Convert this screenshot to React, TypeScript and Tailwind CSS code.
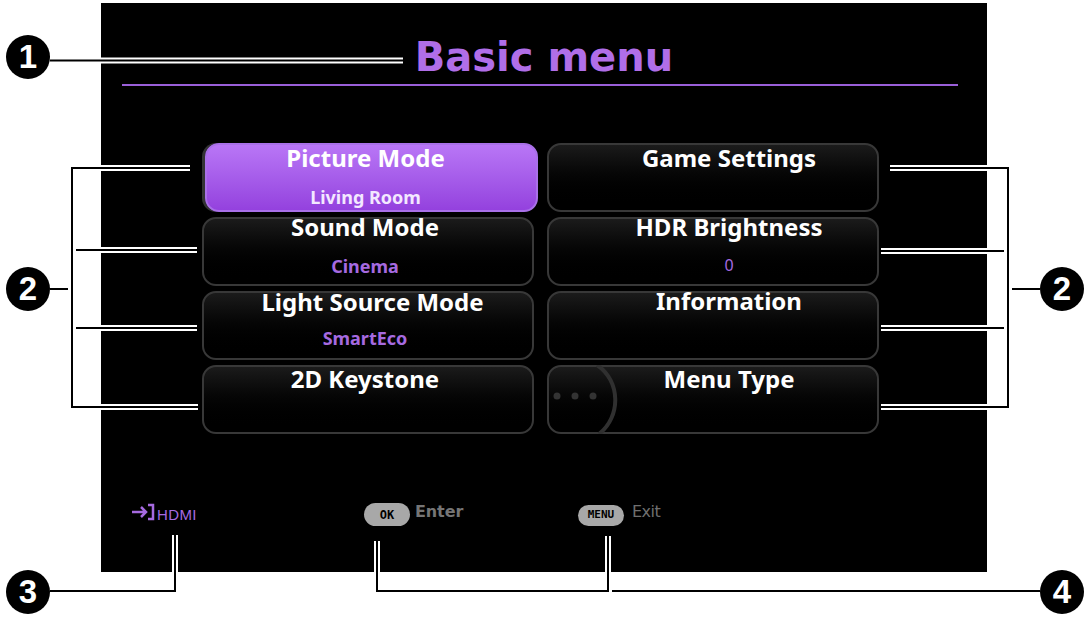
const font = "font-['DejaVu_Sans',sans-serif]";

type Item = { title: string; value?: string; pad: string; gap: string; shift?: string; selected?: boolean; dots?: boolean };

const left: Item[] = [
  { title: "Picture Mode", value: "Living Room", pad: "mt-0", gap: "mt-[16px]", selected: true },
  { title: "Sound Mode", value: "Cinema", pad: "-mt-[5px]", gap: "mt-[16px]" },
  { title: "Light Source Mode", value: "SmartEco", pad: "-mt-[4px]", gap: "mt-[13px]", shift: "pl-[15px]" },
  { title: "2D Keystone", pad: "-mt-[1px]", gap: "" },
];

const right: Item[] = [
  { title: "Game Settings", pad: "mt-0", gap: "" },
  { title: "HDR Brightness", value: "0", pad: "-mt-[5px]", gap: "mt-[15px]" },
  { title: "Information", pad: "-mt-[5px]", gap: "" },
  { title: "Menu Type", pad: "-mt-[1px]", gap: "", dots: true },
];

function MenuCard({ item, side }: { item: Item; side: string }) {
  return (
    <div
      className={
        item.selected
          ? "relative h-[69px] w-[333px] translate-x-[3px] rounded-[14px] border-2 border-[#a970e8] bg-gradient-to-b from-[#b976f6] to-[#9441de] text-center shadow-[-3px_0_0_0_#333]"
          : "relative h-[69px] w-[332px] rounded-[14px] border-2 border-[#383838] bg-gradient-to-b from-[#1b1b1b] to-[#000] text-center"
      }
    >
      {item.dots && (
        <svg className="absolute left-[-2px] top-[-2px]" width="80" height="69" viewBox="0 0 80 69">
          <path d="M50 0 C74 16 74 52 52 69" fill="none" stroke="#303030" strokeWidth="4" />
          <circle cx="10" cy="31" r="3.5" fill="#333" />
          <circle cx="28" cy="31" r="3.5" fill="#333" />
          <circle cx="46" cy="31" r="3.5" fill="#333" />
        </svg>
      )}
      <div className={`relative font-['Noto_Sans',sans-serif] ${item.pad} ${item.selected ? "pr-[12px]" : side}`}>
        <div className={`text-[24px] font-bold leading-[26px] text-white ${item.shift ?? ""}`}>{item.title}</div>
        {item.value && (
          <div
            className={
              item.selected
                ? `${item.gap} text-[18px] font-bold leading-[20px] text-[#f3e8ff]`
                : item.value === "0"
                  ? `${item.gap} text-[16px] leading-[20px] text-[#a66ae0]`
                  : `${item.gap} text-[18px] font-bold leading-[20px] text-[#a66ae0]`
            }
          >
            {item.value}
          </div>
        )}
      </div>
    </div>
  );
}

function Badge({ n, className }: { n: number; className: string }) {
  return (
    <div
      className={`absolute flex h-[44px] w-[44px] items-center justify-center rounded-full bg-black font-['Liberation_Sans',sans-serif] text-[33px] font-bold text-white ${className}`}
    >
      {n}
    </div>
  );
}

// leader lines: white halo where they cross the panel, black core on top
const leaders = [
  "M50 60.5H403",
  "M190 168H72V407H198",
  "M76 250H197",
  "M76 328H197",
  "M50 289H68",
  "M890 168H1008V407H881",
  "M881 251H1004",
  "M881 328H1004",
  "M1012 289H1040",
  "M50 591H175V535",
  "M377 541V591H608V536",
  "M612 591H1040",
];

function Leaders() {
  return (
    <svg className="pointer-events-none absolute left-0 top-0" width="1088" height="617" viewBox="0 0 1088 617">
      {leaders.map((d) => (
        <path key={d + "w"} d={d} fill="none" stroke="#fff" strokeWidth="6" />
      ))}
      {leaders.map((d) => (
        <path key={d} d={d} fill="none" stroke="#000" strokeWidth="2" />
      ))}
    </svg>
  );
}

export default function App() {
  return (
    <div className={`relative h-[617px] w-[1088px] overflow-hidden bg-white pl-[101px] pt-[3px] ${font}`}>
      <div className="flex h-[569px] w-[886px] flex-col bg-black">
        <div className="h-[81px] pt-[26px] text-center text-[40px] font-bold leading-[56px] text-[#b06ee8]">
          Basic menu
        </div>
        <div className="ml-[21px] h-[2px] w-[836px] bg-[#9a5fd8]" />

        <div className="ml-[101px] mt-[57px] grid w-[677px] grid-cols-2 gap-x-[13px]">
          <div className="flex flex-col gap-[5px]">
            {left.map((item) => (
              <MenuCard key={item.title} item={item} side="pr-[6px]" />
            ))}
          </div>
          <div className="flex flex-col gap-[5px]">
            {right.map((item) => (
              <MenuCard key={item.title} item={item} side="pl-[32px]" />
            ))}
          </div>
        </div>

        <div className="mt-[69px] flex items-start pl-[31px]">
          <div className="flex w-[232px] items-start text-[#a66ae0]">
            <svg width="24" height="18" viewBox="0 0 24 18" fill="none" stroke="#a66ae0" strokeWidth="2.5">
              <path d="M0 9H13M9 4L14 9L9 14" />
              <path d="M16 2H21V16H16" />
            </svg>
            <span className="ml-[1px] font-['Liberation_Sans',sans-serif] text-[15px] leading-[24px] tracking-[0.4px]">HDMI</span>
          </div>
          <div className="flex w-[214px] items-start">
            <div className="flex h-[23px] w-[46px] items-center justify-center rounded-full bg-[#a8a8a8] font-['DejaVu_Sans_Mono',monospace] text-[12px] font-bold text-black">
              OK
            </div>
            <span className="ml-[5px] mt-px text-[16px] font-bold leading-[16px] tracking-[-0.1px] text-[#757575]">Enter</span>
          </div>
          <div className="flex items-start pt-[2px]">
            <div className="flex h-[21px] w-[46px] items-center justify-center rounded-full bg-[#a8a8a8] font-['DejaVu_Sans_Mono',monospace] text-[11px] font-bold text-black">
              MENU
            </div>
            <span className="ml-[8px] text-[16px] leading-[14px] tracking-[-0.5px] text-[#6f6f6f]">Exit</span>
          </div>
        </div>
      </div>

      <Leaders />
      <Badge n={1} className="left-[6px] top-[35px]" />
      <Badge n={2} className="left-[6px] top-[267px]" />
      <Badge n={2} className="left-[1040px] top-[267px]" />
      <Badge n={3} className="left-[6px] top-[570px]" />
      <Badge n={4} className="left-[1040px] top-[570px]" />
    </div>
  );
}
